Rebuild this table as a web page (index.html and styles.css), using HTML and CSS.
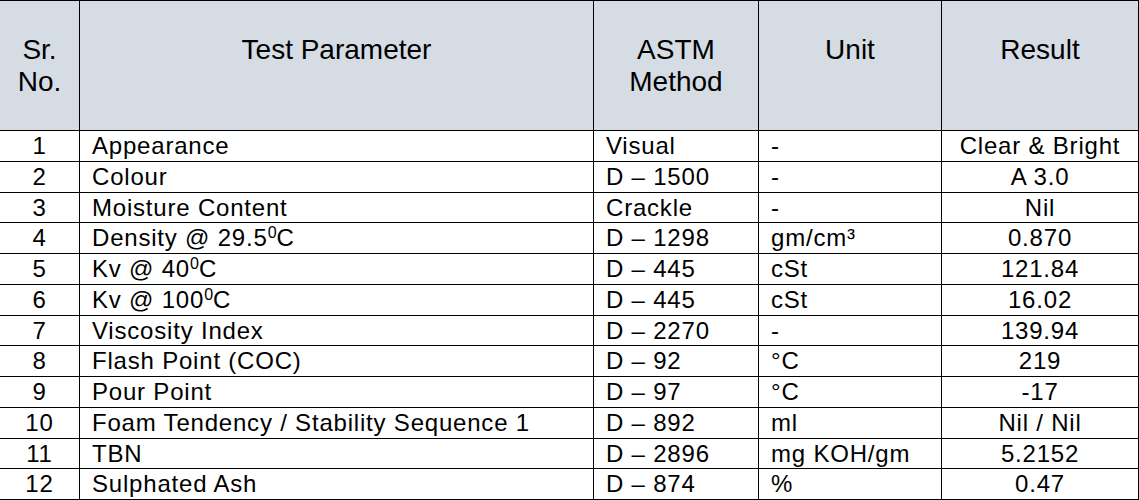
FILE: index.html
```html
<!DOCTYPE html>
<html>
<head>
<meta charset="utf-8">
<link rel="stylesheet" href="styles.css">
</head>
<body>
<table class="report">
  <colgroup>
    <col class="c-no"><col class="c-param"><col class="c-method"><col class="c-unit"><col class="c-result">
  </colgroup>
  <thead>
    <tr>
      <th>Sr.<br>No.</th>
      <th>Test Parameter</th>
      <th>ASTM<br>Method</th>
      <th>Unit</th>
      <th>Result</th>
    </tr>
  </thead>
  <tbody>
    <tr><td class="ctr">1</td><td>Appearance</td><td>Visual</td><td>-</td><td class="ctr">Clear &amp; Bright</td></tr>
    <tr><td class="ctr">2</td><td>Colour</td><td>D – 1500</td><td>-</td><td class="ctr">A 3.0</td></tr>
    <tr><td class="ctr">3</td><td>Moisture Content</td><td>Crackle</td><td>-</td><td class="ctr">Nil</td></tr>
    <tr><td class="ctr">4</td><td>Density @ 29.5<sup>0</sup>C</td><td>D – 1298</td><td>gm/cm³</td><td class="ctr">0.870</td></tr>
    <tr><td class="ctr">5</td><td>Kv @ 40<sup>0</sup>C</td><td>D – 445</td><td>cSt</td><td class="ctr">121.84</td></tr>
    <tr><td class="ctr">6</td><td>Kv @ 100<sup>0</sup>C</td><td>D – 445</td><td>cSt</td><td class="ctr">16.02</td></tr>
    <tr><td class="ctr">7</td><td>Viscosity Index</td><td>D – 2270</td><td>-</td><td class="ctr">139.94</td></tr>
    <tr><td class="ctr">8</td><td>Flash Point (COC)</td><td>D – 92</td><td>°C</td><td class="ctr">219</td></tr>
    <tr><td class="ctr">9</td><td>Pour Point</td><td>D – 97</td><td>°C</td><td class="ctr">-17</td></tr>
    <tr><td class="ctr">10</td><td>Foam Tendency / Stability Sequence 1</td><td>D – 892</td><td>ml</td><td class="ctr">Nil / Nil</td></tr>
    <tr><td class="ctr">11</td><td>TBN</td><td>D – 2896</td><td>mg KOH/gm</td><td class="ctr">5.2152</td></tr>
    <tr><td class="ctr">12</td><td>Sulphated Ash</td><td>D – 874</td><td>%</td><td class="ctr">0.47</td></tr>
  </tbody>
</table>
</body>
</html>
```

FILE: styles.css
```css
html, body {
  margin: 0;
  padding: 0;
  background: #ffffff;
}

body {
  font-family: "Liberation Sans", Arial, sans-serif;
  color: #000000;
  overflow: hidden;
}

.report {
  border-collapse: collapse;
  table-layout: fixed;
  width: 1139px;
  margin-left: -1px;
}

.c-no { width: 80px; }
.c-param { width: 514px; }
.c-method { width: 165px; }
.c-unit { width: 183px; }
.c-result { width: 197px; }

.report th,
.report td {
  border: 1px solid #000000;
  padding: 0;
}

.report th {
  background: #d6dce4;
  font-weight: normal;
  font-size: 28px;
  line-height: 32px;
  height: 64px;
  padding: 33px 4px 32px;
  vertical-align: top;
  text-align: center;
}

.report td {
  font-size: 24px;
  letter-spacing: 0.8px;
  line-height: 28.75px;
  height: 28.75px;
  padding: 1px 4px 0 12px;
  white-space: nowrap;
  text-align: left;
  vertical-align: top;
}

.report td.ctr {
  text-align: center;
  padding: 1px 4px 0;
}

.report sup {
  font-size: 16px;
  line-height: 0;
  vertical-align: 8px;
  letter-spacing: 0;
}
```
